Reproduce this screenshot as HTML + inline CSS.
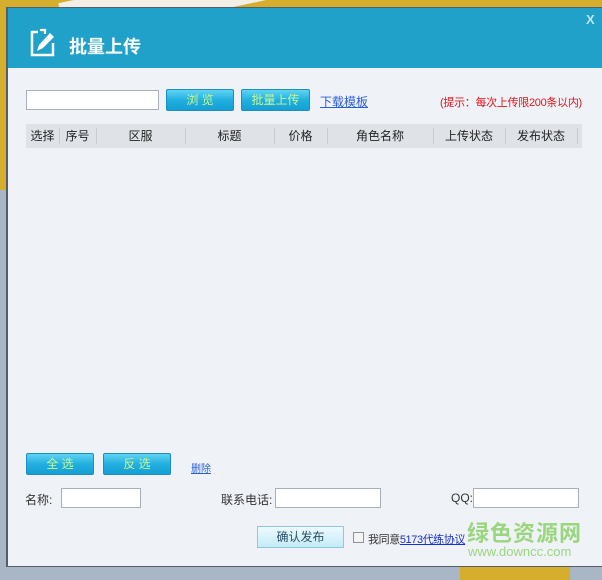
<!DOCTYPE html>
<html><head><meta charset="utf-8"><style>
*{margin:0;padding:0;box-sizing:border-box}
body{width:602px;height:572px;position:relative;overflow:hidden;background:#a9b6c6;font-family:"Liberation Sans","Noto Sans CJK SC",sans-serif;font-size:12px;color:#333}
.abs{position:absolute}
.btn{position:absolute;border:1px solid #1c8fc0;border-radius:2px;background:linear-gradient(#5fd3f2,#22b0e0 50%,#149fd3);color:#c8f78e;text-align:center;font-size:12px;line-height:20px}
.inp{position:absolute;background:#fff;border:1px solid #a9b0b8;height:20px}
.th{position:absolute;top:124px;height:24px;line-height:24px;text-align:center;font-size:12px;color:#222}
.sep{position:absolute;top:128px;width:1px;height:16px;background:#c6ccd3}
</style></head><body>
<div class="abs" style="left:0;top:0;width:602px;height:190px;background:#d6ae2e"></div>
<div class="abs" style="left:60px;top:-20px;width:220px;height:40px;background:#f3efe6;transform:rotate(-12deg)"></div>
<div class="abs" style="left:460px;top:560px;width:110px;height:20px;background:#d6ae2e"></div>
<div class="abs" style="left:6px;top:7px;width:596px;height:560px;background:#555e68"></div>
<div class="abs" style="left:8px;top:8px;width:594px;height:558px;background:#eff2f6"></div>
<div class="abs" style="left:8px;top:8px;width:594px;height:60px;background:#1fa1c9"></div>
<svg class="abs" style="left:28px;top:27px" width="30" height="32" viewBox="0 0 30 32">
<path d="M10 5H4v23h21V16" fill="none" stroke="#fff" stroke-width="2.5"/>
<path d="M12 3h5v4" fill="none" stroke="#fff" stroke-width="2.2"/>
<path d="M9 24l2-6L22 6l4 4-11 11z" fill="#fff"/>
</svg>
<div class="abs" style="left:69px;top:33px;font-size:18px;font-weight:bold;color:#fff">批量上传</div>
<div class="abs" style="left:586px;top:12px;font-size:13px;font-weight:bold;color:#bfe6f3">X</div>

<div class="inp" style="left:26px;top:90px;width:133px;"></div>
<div class="btn" style="left:166px;top:89px;width:68px;height:22px">浏 览</div>
<div class="btn" style="left:241px;top:89px;width:69px;height:22px">批量上传</div>
<div class="abs" style="left:320px;top:93px;color:#2a5fd8;text-decoration:underline;font-size:12px">下载模板</div>
<div class="abs" style="left:440px;top:94px;color:#e0161c;font-size:11px;letter-spacing:-0.3px">(提示：每次上传限200条以内)</div>

<div class="abs" style="left:26px;top:124px;width:556px;height:24px;background:#dfe3e8"></div>
<div class="th" style="left:26px;width:33px">选择</div>
<div class="th" style="left:59px;width:37px">序号</div>
<div class="th" style="left:96px;width:89px">区服</div>
<div class="th" style="left:185px;width:89px">标题</div>
<div class="th" style="left:274px;width:53px">价格</div>
<div class="th" style="left:327px;width:106px">角色名称</div>
<div class="th" style="left:433px;width:72px">上传状态</div>
<div class="th" style="left:505px;width:72px">发布状态</div>
<div class="sep" style="left:59px"></div><div class="sep" style="left:96px"></div><div class="sep" style="left:185px"></div><div class="sep" style="left:274px"></div><div class="sep" style="left:327px"></div><div class="sep" style="left:433px"></div><div class="sep" style="left:505px"></div><div class="sep" style="left:577px"></div>

<div class="btn" style="left:26px;top:453px;width:68px;height:22px">全 选</div>
<div class="btn" style="left:103px;top:453px;width:68px;height:22px">反 选</div>
<div class="abs" style="left:191px;top:460px;color:#2a5fd8;text-decoration:underline;font-size:10px">删除</div>

<div class="abs" style="left:25px;top:491px">名称:</div>
<div class="inp" style="left:61px;top:488px;width:80px"></div>
<div class="abs" style="left:221px;top:491px">联系电话:</div>
<div class="inp" style="left:275px;top:488px;width:106px"></div>
<div class="abs" style="left:451px;top:491px">QQ:</div>
<div class="inp" style="left:473px;top:488px;width:106px"></div>

<div class="abs" style="left:257px;top:526px;width:87px;height:22px;border:1px solid #8cc8de;background:linear-gradient(#eefaff,#c4ebf8);text-align:center;line-height:20px;color:#2a4f66">确认发布</div>
<div class="abs" style="left:353px;top:532px;width:11px;height:11px;border:1px solid #8a929a;background:#f4f4f4"></div>
<div class="abs" style="left:368px;top:531px;font-size:11px;letter-spacing:-0.4px">我同意<span style="color:#1a2fd0;text-decoration:underline">5173代练协议</span></div>
<div class="abs" style="left:467px;top:516px;font-size:22px;font-weight:bold;color:#8cd26a;opacity:.85;letter-spacing:1px">绿色资源网</div>
<div class="abs" style="left:468px;top:544px;font-size:13px;color:#8cd26a;opacity:.85">www.downcc.com</div>
</body></html>
